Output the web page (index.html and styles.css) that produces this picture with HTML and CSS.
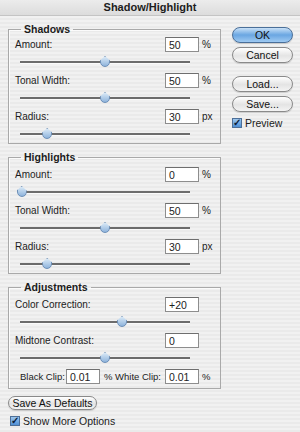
FILE: index.html
```html
<!DOCTYPE html>
<html lang="en">
<head>
  <meta charset="UTF-8">
  <title>Shadow/Highlight</title>
  <link rel="stylesheet" href="styles.css">
</head>
<body>
  <div class="titlebar">Shadow/Highlight</div>

  <div class="main">
    <div class="groups">
      <fieldset class="group first">
        <legend>Shadows</legend>
        <div class="row"><span class="label">Amount:</span><span class="field">50</span><span class="unit">%</span></div>
        <div class="slider"><div class="track"></div><span class="thumb" style="left: 50%"></span></div>
        <div class="row"><span class="label">Tonal Width:</span><span class="field">50</span><span class="unit">%</span></div>
        <div class="slider"><div class="track"></div><span class="thumb" style="left: 50%"></span></div>
        <div class="row"><span class="label">Radius:</span><span class="field">30</span><span class="unit">px</span></div>
        <div class="slider last"><div class="track"></div><span class="thumb" style="left: 16%"></span></div>
      </fieldset>

      <fieldset class="group">
        <legend>Highlights</legend>
        <div class="row"><span class="label">Amount:</span><span class="field">0</span><span class="unit">%</span></div>
        <div class="slider"><div class="track"></div><span class="thumb" style="left: 1%"></span></div>
        <div class="row"><span class="label">Tonal Width:</span><span class="field">50</span><span class="unit">%</span></div>
        <div class="slider"><div class="track"></div><span class="thumb" style="left: 50%"></span></div>
        <div class="row"><span class="label">Radius:</span><span class="field">30</span><span class="unit">px</span></div>
        <div class="slider last"><div class="track"></div><span class="thumb" style="left: 16%"></span></div>
      </fieldset>

      <fieldset class="group">
        <legend>Adjustments</legend>
        <div class="row"><span class="label">Color Correction:</span><span class="field">+20</span><span class="unit"></span></div>
        <div class="slider"><div class="track"></div><span class="thumb" style="left: 60%"></span></div>
        <div class="row"><span class="label">Midtone Contrast:</span><span class="field">0</span><span class="unit"></span></div>
        <div class="slider"><div class="track"></div><span class="thumb" style="left: 50%"></span></div>
        <div class="clip-row">
          <span class="clip-label">Black Clip:</span><span class="field">0.01</span>
          <span class="clip-label mid">% White Clip:</span><span class="field">0.01</span><span class="unit">%</span>
        </div>
      </fieldset>

      <div class="bottom">
        <button class="btn defaults">Save As Defaults</button>
        <label class="check"><span class="box">&#10003;</span>Show More Options</label>
      </div>
    </div>

    <div class="actions">
      <button class="btn primary">OK</button>
      <button class="btn">Cancel</button>
      <button class="btn spaced">Load...</button>
      <button class="btn">Save...</button>
      <label class="check"><span class="box">&#10003;</span>Preview</label>
    </div>
  </div>
</body>
</html>
```

FILE: styles.css
```css
body {
  margin: 0;
  width: 300px;
  height: 432px;
  overflow: hidden;
  font-family: "Liberation Sans", Arial, sans-serif;
  font-size: 10px;
  color: #1c1c1c;
  background: repeating-linear-gradient(#f1f1f1 0 2px, #eaeaea 2px 4px);
}

.titlebar {
  height: 15px;
  line-height: 15px;
  text-align: center;
  font-size: 11px;
  font-weight: bold;
  background: linear-gradient(#ececec, #dcdcdc);
  border-bottom: 1px solid #c4c4c4;
}

.main {
  display: flex;
  padding: 7px 0 0 8px;
  gap: 11px;
}

.groups {
  width: 213px;
}

.group {
  margin: 0 0 7px 0;
  padding: 4px 2px 1px 6px;
  border: 1px solid #a9a9a9;
  box-shadow: inset 1px 1px 0 #fbfbfb;
}

.group.first {
  padding-top: 2px;
}

.group legend {
  margin-left: 6px;
  padding: 0 3px;
  font-weight: bold;
  font-size: 10.5px;
  line-height: 12px;
}

.row {
  display: flex;
  align-items: center;
  height: 15px;
}

.label {
  flex: 1;
}

.field {
  flex: none;
  box-sizing: border-box;
  width: 34px;
  height: 15px;
  padding: 1px 0 0 3px;
  background: #fff;
  border: 1px solid #8d8d8d;
  border-top-color: #6e6e6e;
  font-size: 10.5px;
  line-height: 12px;
}

.unit {
  width: 16px;
  padding-left: 3px;
}

.slider {
  position: relative;
  width: 170px;
  height: 18px;
  margin: 0 0 3px 5px;
}

.slider.last {
  margin-bottom: 0;
}

.track {
  position: absolute;
  left: 0;
  right: 0;
  top: 9px;
  height: 2px;
  background: #6c6c6c;
  border-bottom: 1px solid #fafafa;
}

.thumb {
  position: absolute;
  top: 4px;
  width: 10px;
  height: 11px;
  margin-left: -5px;
  background: linear-gradient(#d8e8f6, #8fb4dc);
  border: 1px solid #6d8fb7;
  border-radius: 1px 1px 5px 5px;
  clip-path: polygon(50% 0, 100% 40%, 100% 100%, 0 100%, 0 40%);
  box-sizing: border-box;
}

.clip-row {
  display: flex;
  align-items: center;
  height: 15px;
  margin: 0 0 3px 0;
  padding-left: 5px;
  white-space: nowrap;
  font-size: 9.5px;
}

.clip-label {
  width: 46px;
}

.clip-label.mid {
  width: 61px;
  padding-left: 4px;
}

.btn {
  display: block;
  box-sizing: border-box;
  height: 16px;
  padding: 0;
  font-family: "Liberation Sans", Arial, sans-serif;
  font-size: 10.5px;
  color: #111;
  background: linear-gradient(#ffffff, #e4e4e4 55%, #f4f4f4);
  border: 1px solid #8a8a8a;
  border-radius: 8px;
  box-shadow: 0 1px 1px rgba(0, 0, 0, 0.15);
}

.btn.primary {
  background: linear-gradient(#c9e1f7, #6aa6e2 50%, #9fcaf2);
  border-color: #4a6f99;
}

.actions {
  width: 61px;
  padding-top: 4px;
  display: flex;
  flex-direction: column;
  gap: 4px;
}

.actions .btn {
  width: 61px;
}

.actions .spaced {
  margin-top: 9px;
}

.check {
  display: flex;
  align-items: center;
  gap: 3px;
  font-size: 10.5px;
  margin-top: 1px;
}

.box {
  box-sizing: border-box;
  width: 10px;
  height: 10px;
  border: 1px solid #4d6f98;
  background: linear-gradient(#9cc6ee, #4f8fd4);
  color: #0b1e3a;
  font-size: 10px;
  font-weight: bold;
  line-height: 8px;
  text-align: center;
}

.bottom {
  margin-top: 2px;
}

.defaults {
  width: 89px;
  height: 14px;
  margin-bottom: 5px;
}

.bottom .check {
  padding-left: 2px;
}
```
